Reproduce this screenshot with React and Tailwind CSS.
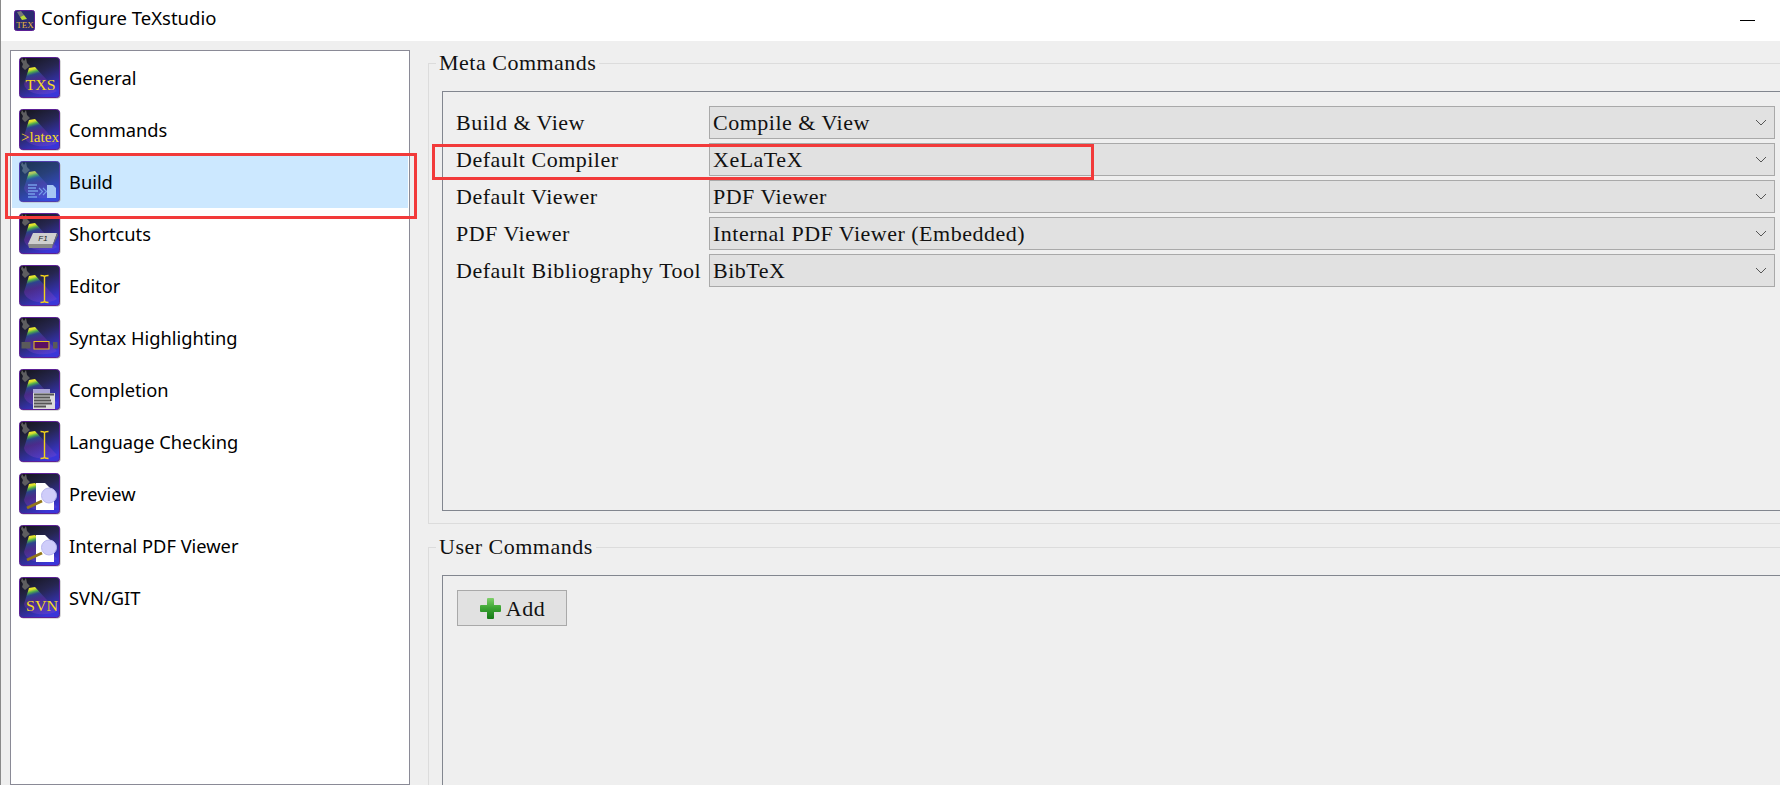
import React from 'react';

const serif = { fontFamily: '"Liberation Serif", serif' };
const sans = { fontFamily: '"Noto Sans", sans-serif' };

const Overlay = ({ kind }) => {
  switch (kind) {
    case 'txs':
      return <text x="21.5" y="33" textAnchor="middle" fontSize="14" fill="#f5dc22" style={serif} textLength="30" lengthAdjust="spacingAndGlyphs">TXS</text>;
    case 'latex':
      return <text x="21" y="33" textAnchor="middle" fontSize="15" fill="#f5dc22" style={serif} textLength="38" lengthAdjust="spacingAndGlyphs">{'>latex'}</text>;
    case 'svn':
      return <text x="23" y="34" textAnchor="middle" fontSize="15" fill="#f5dc22" style={serif} textLength="32" lengthAdjust="spacingAndGlyphs">SVN</text>;
    case 'build':
      return (
        <g>
          <path d="M9 24h9M9 27h8M9 30h10M9 33h7M9 36h9" stroke="#8fa6ea" strokeWidth="1.6" />
          <path d="M20 27l3.5 3.5-3.5 3.5M24 27l3.5 3.5-3.500 3.5" stroke="#8fa6ea" strokeWidth="1.2" fill="none" />
          <path d="M28 24h6l3 3V37h-9z" fill="#d3e2fa" />
        </g>
      );
    case 'f1':
      return (
        <g>
          <path d="M14 20h24l-4 11H9z" fill="#cfcfcf" />
          <path d="M9 31h25l-1 4H10z" fill="#8a8a8a" />
          <path d="M34 31l4-11 1 2-6 13z" fill="#6c6c6c" />
          <text x="24" y="28" textAnchor="middle" fontSize="8" fontStyle="italic" fill="#222" style={{ fontFamily: '"Liberation Sans", sans-serif' }}>F1</text>
        </g>
      );
    case 'cursor':
      return <path d="M21.5 10.5c2 0 4 .3 4 1.5c0-1.200 2-1.500 4-1.500M25.5 12v24M21.5 37.500c2 0 4-.3 4-1.500c0 1.200 2 1.500 4 1.500" stroke="#f2d21b" strokeWidth="1.4" fill="none" />;
    case 'syntax':
      return (
        <g>
          <rect x="2.5" y="25" width="9" height="6.5" fill="#5a5a5a" />
          <rect x="15" y="24.5" width="15" height="7.5" fill="#5c0f62" stroke="#e5bd1f" />
          <rect x="34" y="25" width="4.5" height="6.5" fill="#5a5a5a" />
        </g>
      );
    case 'completion':
      return (
        <g>
          <rect x="14" y="20" width="17" height="4" fill="#a9a4d6" />
          <rect x="14" y="24" width="22" height="16" fill="#dcdcdc" />
          <path d="M15 25.5h20M15 28.5h16M15 31.5h17M15 34.5h18M15 37.5h12" stroke="#555" strokeWidth="2" />
        </g>
      );
    case 'preview':
      return (
        <g>
          <path d="M17 10h9l9 9v18H17z" fill="#fff" />
          <circle cx="30" cy="22.5" r="7.5" fill="#cfcdfa" stroke="#b8b6ee" />
          <path d="M8 35l15-7" stroke="#93771a" strokeWidth="3" />
        </g>
      );
    default:
      return null;
  }
};

const SpotIcon = ({ kind, selected }) => (
  <svg width="42" height="42" viewBox="0 0 42 42" className="shrink-0">
    <defs>
      <linearGradient id="tile" x1="0.1" y1="0" x2="0.6" y2="1">
        <stop offset="0" stopColor="#15151a" />
        <stop offset="0.45" stopColor="#262650" />
        <stop offset="1" stopColor="#3a36d8" />
      </linearGradient>
      <linearGradient id="glow" gradientUnits="userSpaceOnUse" x1="12" y1="9" x2="20" y2="38">
        <stop offset="0.03" stopColor="#f8ee22" />
        <stop offset="0.12" stopColor="#d8e030" />
        <stop offset="0.2" stopColor="#4fae4a" />
        <stop offset="0.3" stopColor="#2f4fa8" stopOpacity="0.7" />
        <stop offset="0.5" stopColor="#6a2ea8" stopOpacity="0.5" />
        <stop offset="1" stopColor="#6f47cc" stopOpacity="0.45" />
      </linearGradient>
    </defs>
    <rect x="1.5" y="1.5" width="40" height="40" rx="3" fill="#b4b4b4" />
    <rect x="0.5" y="0.5" width="40" height="40" rx="3" fill="url(#tile)" stroke="#5c1f96" />
    <path d="M10 11L5 27c2 11 23 13 33 7L16 10z" fill="url(#glow)" />
    <path d="M3 1l2 3 2-3 1 5 3 3-5 4-3-3 1-3-2-3z" fill="#5e5e60" />
    <Overlay kind={kind} />
    {selected && <rect x="0" y="0" width="41" height="41" rx="3" fill="#2f86e6" opacity="0.28" />}
  </svg>
);

const pages = [
  { label: 'General', kind: 'txs' },
  { label: 'Commands', kind: 'latex' },
  { label: 'Build', kind: 'build', selected: true },
  { label: 'Shortcuts', kind: 'f1' },
  { label: 'Editor', kind: 'cursor' },
  { label: 'Syntax Highlighting', kind: 'syntax' },
  { label: 'Completion', kind: 'completion' },
  { label: 'Language Checking', kind: 'cursor' },
  { label: 'Preview', kind: 'preview' },
  { label: 'Internal PDF Viewer', kind: 'preview' },
  { label: 'SVN/GIT', kind: 'svn' },
];

const metaRows = [
  { label: 'Build & View', value: 'Compile & View' },
  { label: 'Default Compiler', value: 'XeLaTeX' },
  { label: 'Default Viewer', value: 'PDF Viewer' },
  { label: 'PDF Viewer', value: 'Internal PDF Viewer (Embedded)' },
  { label: 'Default Bibliography Tool', value: 'BibTeX' },
];

const Combo = ({ value }) => (
  <div className="flex h-[33px] flex-1 items-center justify-between border border-[#a9a9a9] bg-[#e1e1e1] pl-[3px] pr-[7px]">
    <span>{value}</span>
    <svg width="12" height="7" viewBox="0 0 12 7">
      <path d="M1 1l5 5 5-5" stroke="#555" strokeWidth="1" fill="none" />
    </svg>
  </div>
);

const Group = ({ title, className, children }) => (
  <fieldset className={`shrink-0 border border-r-0 border-[#dcdcdc] pl-[13px] pt-[16px] ${className}`}>
    <legend className="ml-[-6px] px-[3px] leading-[24px]">{title}</legend>
    {children}
  </fieldset>
);

export default function App() {
  return (
    <div className="relative flex h-[785px] w-[1780px] flex-col overflow-hidden border-l border-[#8a8a8a] bg-[#efefef]">
      <div className="flex h-[41px] items-center bg-white pl-[13px] pr-[25px]">
        <svg width="22" height="22" viewBox="0 0 22 22">
          <rect x="0.5" y="0.5" width="20" height="20" rx="2" fill="#2b2a70" stroke="#5c1f96" />
          <path d="M3 2l3 5 4-2-3-4z" fill="#777" />
          <path d="M6 7l4-2 3 4-5 1z" fill="#b8d83a" />
          <text x="11" y="18" textAnchor="middle" fontSize="9" fill="#e9b93a" style={serif}>TEX</text>
        </svg>
        <span className="mb-[6px] ml-[5px] text-[18.5px] text-black" style={sans}>Configure TeXstudio</span>
        <div className="ml-auto h-px w-[15px] bg-black" />
      </div>

      <div className="flex min-h-0 flex-1 pl-[9px] pt-[9px]">
        <ul className="w-[400px] shrink-0 border border-[#8a8a96] bg-white p-px text-[18.3px] text-black" style={sans}>
          {pages.map((page) => (
            <li key={page.label} className={`flex h-[52px] items-center gap-[8px] pl-[7px] ${page.selected ? 'bg-[#cce8ff]' : ''}`}>
              <SpotIcon kind={page.kind} selected={page.selected} />
              <span>{page.label}</span>
            </li>
          ))}
        </ul>

        <div className="ml-[18px] flex min-w-0 flex-1 flex-col pt-px text-[22px] tracking-[0.5px] text-[#111]" style={serif}>
          <Group title="Meta Commands" className="h-[473px]">
            <div className="flex h-[420px] flex-col gap-[4px] border border-r-0 border-[#82868f] pl-[13px] pr-[5px] pt-[14px]">
              {metaRows.map((row) => (
                <div key={row.label} className="flex items-center">
                  <span className="w-[253px] shrink-0 whitespace-nowrap">{row.label}</span>
                  <Combo value={row.value} />
                </div>
              ))}
            </div>
          </Group>
          <Group title="User Commands" className="mt-[11px] border-b-0">
            <div className="h-[300px] border border-r-0 border-[#82868f] pl-[14px] pt-[14px]">
              <button className="flex h-[36px] w-[110px] items-center justify-center gap-[4px] border border-[#a9a9a9] bg-[#e1e1e1]">
                <svg width="23" height="23" viewBox="0 0 23 23">
                  <defs>
                    <linearGradient id="plus" x1="0" y1="0" x2="0" y2="1">
                      <stop offset="0" stopColor="#7fd06a" />
                      <stop offset="0.45" stopColor="#3fa636" />
                      <stop offset="1" stopColor="#157a16" />
                    </linearGradient>
                  </defs>
                  <path d="M9 1h5a1 1 0 0 1 1 1v6h6a1 1 0 0 1 1 1v5a1 1 0 0 1-1 1h-6v6a1 1 0 0 1-1 1H9a1 1 0 0 1-1-1v-6H2a1 1 0 0 1-1-1V9a1 1 0 0 1 1-1h6V2a1 1 0 0 1 1-1z" fill="url(#plus)" />
                </svg>
                <span>Add</span>
              </button>
            </div>
          </Group>
        </div>
      </div>

      {/* red annotation boxes drawn on top of the dialog */}
      <div className="absolute left-[4px] top-[153px] h-[66px] w-[412px] border-[3px] border-[#f23a3a]" />
      <div className="absolute left-[431px] top-[144px] h-[36px] w-[662px] border-[3px] border-[#f23a3a]" />
    </div>
  );
}
